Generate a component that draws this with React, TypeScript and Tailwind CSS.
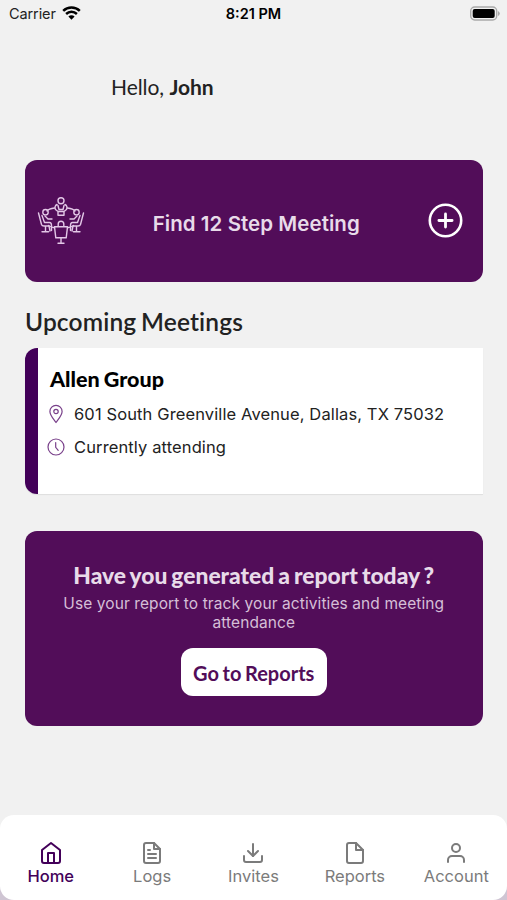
import type { ReactNode } from 'react'
import { FiDownload, FiFile, FiFileText, FiHome, FiUser } from 'react-icons/fi'
import type { IconType } from 'react-icons'
import { clsx } from 'clsx'

const TABS: { label: string; icon: IconType }[] = [
  { label: 'Home', icon: FiHome },
  { label: 'Logs', icon: FiFileText },
  { label: 'Invites', icon: FiDownload },
  { label: 'Reports', icon: FiFile },
  { label: 'Account', icon: FiUser },
]

export default function App() {
  return (
    <div className="flex h-[900px] w-[507px] flex-col overflow-hidden bg-[#f1f1f1] font-['Inter',sans-serif] text-[#222]">
      <StatusBar />

      <main className="flex flex-1 flex-col px-[25px]">
        <p className="mt-[45px] pl-[86px] font-['Lato',sans-serif] text-[21px] leading-[28px] tracking-[-0.05px]">
          Hello, <span className="font-bold">John</span>
        </p>

        {/* Find a meeting */}
        <button className="mt-[59px] flex h-[122px] w-[457.5px] items-center rounded-xl bg-[#520d59] pr-[18px] pl-[12px] text-left">
          <MeetingIcon />
          <span className="mt-[6px] mr-px flex-1 text-center text-[20.5px] font-semibold tracking-[0.05px] text-[#e8dbe9]">
            Find 12 Step Meeting
          </span>
          <svg className="h-[38px] w-[38px]" viewBox="0 0 38 38" fill="none" stroke="#fff" strokeLinecap="round">
            <circle cx="18.5" cy="18.5" r="15.7" strokeWidth="2.6" />
            <path d="M18.5 11.9v13.2M11.9 18.5h13.2" strokeWidth="2.8" />
          </svg>
        </button>

        <h2 className="mt-[24px] font-['Lato',sans-serif] text-[24.5px] leading-[32px] font-semibold tracking-[0.15px] [font-variant-ligatures:none] [word-spacing:-1.5px]">
          Upcoming Meetings
        </h2>

        {/* Next meeting */}
        <section className="mt-[10px] h-[146px] w-[457.5px] rounded-l-xl border-l-[13px] border-[#430059] bg-white pt-[17px] pl-[9px] shadow-[0_1px_1px_rgba(0,0,0,0.08)]">
          <h3 className="mb-px pl-[3px] font-['Lato',sans-serif] text-[21.5px] leading-[28px] font-black text-black [word-spacing:-1px]">
            Allen Group
          </h3>
          <Detail icon={<PinIcon />}>601 South Greenville Avenue, Dallas, TX 75032</Detail>
          <Detail icon={<ClockIcon />}>Currently attending</Detail>
        </section>

        {/* Report prompt */}
        <section className="mt-[37px] flex h-[195px] w-[457.5px] flex-col items-center rounded-xl bg-[#520d59] pt-[29px] text-center">
          <h3 className="font-['Lato',sans-serif] text-[22.8px] leading-[30px] font-black text-[#e8dbe9] [word-spacing:-1.4px]">
            Have you generated a report today ?
          </h3>
          <p className="mt-[4px] w-[400px] text-[15.5px] leading-[19px] tracking-[0.09px] text-[#d5bfd7]">
            Use your report to track your activities and meeting attendance
          </p>
          <button className="mt-[16px] h-[48px] w-[146px] rounded-xl bg-white pt-px font-['Lato',sans-serif] text-[20px] font-bold whitespace-nowrap text-[#520d59] [word-spacing:-1.3px]">
            Go to Reports
          </button>
        </section>
      </main>

      <div className="bg-[linear-gradient(#f1f1f1_50%,#cfc5d3_50%)]">
        <nav className="grid h-[85px] grid-cols-5 rounded-[14px] bg-white pt-[26px]">
          {TABS.map(({ label, icon: Icon }, i) => (
            <button
              key={label}
              className={clsx('flex flex-col items-center', i === 0 ? 'text-[#430059]' : 'text-[#7b7b7b]')}
            >
              <Icon className="h-6 w-6" />
              <span className={clsx('text-[16.5px] leading-[22px]', i === 0 && 'font-medium')}>{label}</span>
            </button>
          ))}
        </nav>
      </div>
    </div>
  )
}

function StatusBar() {
  return (
    <header className="grid h-[28px] grid-cols-3 items-center pr-[7px] pl-[9px] text-[14.5px] leading-[28px] text-black">
      <div className="flex items-center gap-[6px] tracking-[-0.1px] text-[#222]">
        Carrier
        <svg className="mb-[2px] h-[14px] w-[19px]" viewBox="0 0 19 14" fill="none" stroke="#000" strokeWidth="2.5">
          <path d="M1.2 4.8a12 12 0 0 1 16.6 0M4.1 8a7.8 7.8 0 0 1 10.8 0" />
          <path d="M9.5 13.7 6.4 10.5a4.4 4.4 0 0 1 6.2 0z" fill="#000" stroke="none" />
        </svg>
      </div>
      <div className="pr-[2px] text-center font-semibold">8:21 PM</div>
      <svg className="mb-[2px] ml-auto h-[15px] w-[31px]" viewBox="0 0 31 15">
        <rect x="1.7" y="1" width="26" height="13" rx="4" fill="#f1f1f1" stroke="#a9a9a9" strokeWidth="1.4" />
        <rect x="3.7" y="3" width="22" height="9" rx="2" fill="#000" />
        <path d="M29 5v5q1.8-1 1.8-2.5T29 5z" fill="#a9a9a9" />
      </svg>
    </header>
  )
}

function Detail({ icon, children }: { icon: ReactNode; children: ReactNode }) {
  return (
    <div className="flex h-[33px] items-center gap-[9px] pt-[7px] text-[16.5px] tracking-[0.12px] whitespace-nowrap">
      {icon}
      <span>{children}</span>
    </div>
  )
}

function PinIcon() {
  return (
    <svg className="h-[20px] w-[18px]" viewBox="0 0 18 20" fill="none" stroke="#79408a" strokeWidth="1.2">
      <path d="M9 18.5C7 15.5 2.9 11.5 2.9 7.5a6.1 6.1 0 0 1 12.2 0c0 4-4.1 8-6.1 11z" strokeLinejoin="round" />
      <circle cx="9" cy="7.5" r="2.2" />
    </svg>
  )
}

function ClockIcon() {
  return (
    <svg className="h-[18px] w-[18px]" viewBox="0 0 18 18" fill="none" stroke="#79408a" strokeWidth="1.2" strokeLinecap="round">
      <circle cx="9" cy="9" r="8" />
      <path d="M8.7 4.5V9.4l2.5 3" />
    </svg>
  )
}

/* Four people seated round a table */
function MeetingIcon() {
  return (
    <svg className="h-[50px] w-[50px] shrink-0" viewBox="0.5 0 50 50" fill="none" stroke="#e3c8e7" strokeWidth="1.4" strokeLinecap="round" strokeLinejoin="round">
      {/* table */}
      <path d="M31 12c4 .5 6.500 1.600 7.500 3M18 12c-4 .5-6.500 1.600-7.500 3M12 29.500c2 1.500 3.500 2 6 2.200M37 29.500c-2 1.500-3.500 2-6 2.200" />
      {/* far seat */}
      <circle cx="24.5" cy="4.8" r="3" />
      <path d="M20.5 8.5c-2 1-2.500 3-1.500 5l2.500 2h6l2.500-2c1-2 .5-4-1.500-5M21.500 9.500l1 4h4l1-4M21.500 15.500v3.700h6v-3.700" />
      {/* left seat */}
      <circle cx="9" cy="16.2" r="2.7" />
      <path d="M2 17l3 11.500c.4 1.200 1 1.500 2.500 1.500h5l1 5M5.500 19.500l2.500 7h5c2 0 2 1.200 2 3v5M8.500 20l3 3h4M9 30v5.500M5.500 35.800H12" />
      {/* right seat */}
      <circle cx="40" cy="16.2" r="2.7" />
      <path d="M47 17l-3 11.500c-.4 1.200-1 1.500-2.500 1.500h-5l-1 5M43.500 19.500l-2.500 7h-5c-2 0-2 1.200-2 3v5M40.500 20l-3 3h-4M40 30v5.500M37 35.800h6.500" />
      {/* near seat */}
      <path d="M21.700 30v-2a2.800 2.800 0 0 1 5.600 0v2M18 30.800h13l-1.300 11H19.300zM24.500 42v5M21.500 47.200h6" />
    </svg>
  )
}
